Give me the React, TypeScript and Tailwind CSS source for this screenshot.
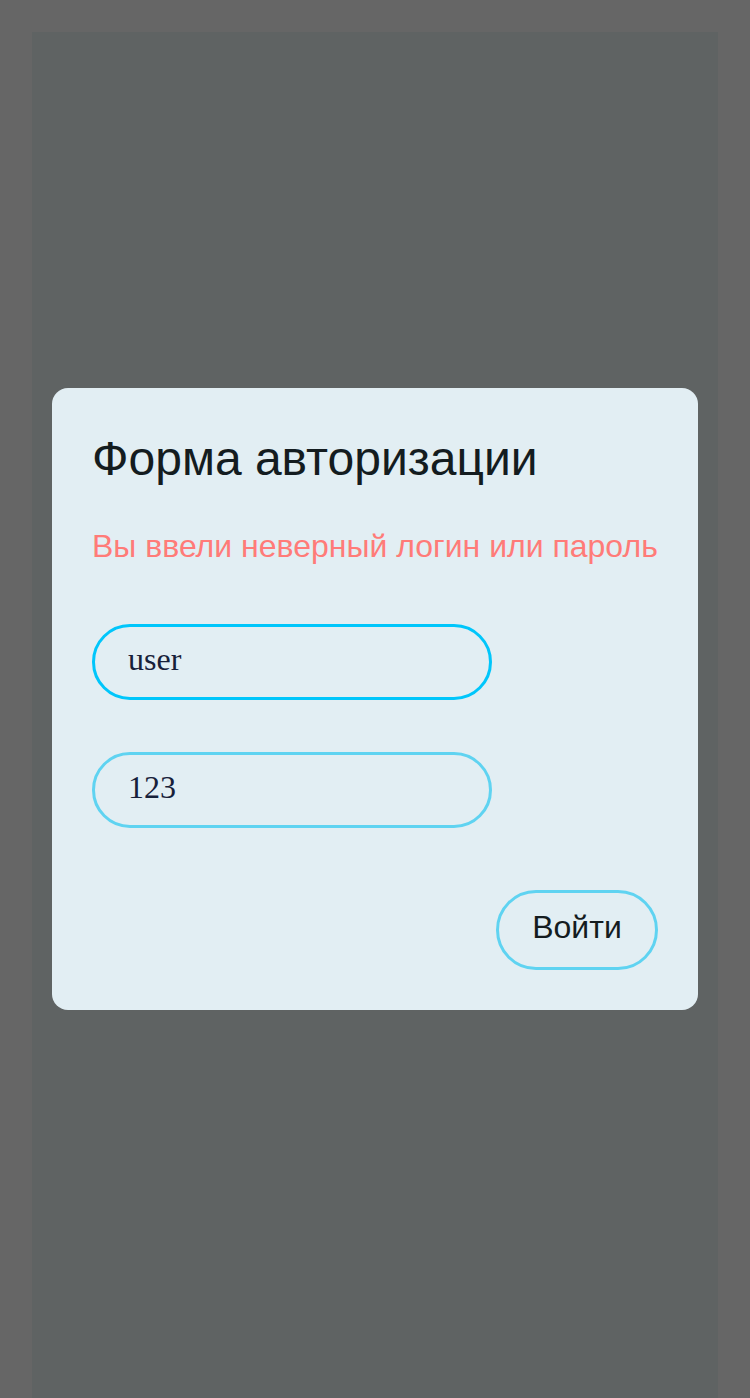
import React from 'react';

const App: React.FC = () => {
  return (
    <div className="min-h-screen bg-[#666666] px-8 pt-8">
      <div className="flex h-[1366px] items-center bg-[#5f6363] px-5 pb-8">
        <form
          className="flex w-full flex-col rounded-2xl bg-[#e2eef3] px-10 pt-[43px] pb-10"
          onSubmit={(e) => e.preventDefault()}
        >
          <h1 className="text-[48px] leading-[56px] text-[#141c1f] [font-family:'Liberation_Sans',Arial,sans-serif]">
            Форма авторизации
          </h1>
          <p className="mt-[39px] text-[32px] leading-[40px] text-[#ff7b78] [font-family:'Liberation_Sans',Arial,sans-serif]">
            Вы ввели неверный логин или пароль
          </p>
          <input
            defaultValue="user"
            className="mt-[58px] h-[76px] w-[400px] rounded-full border-[3px] border-[#00c6fb] bg-transparent px-[33px] pb-[6px] text-[32px] text-[#17213a] outline-none [font-family:'Liberation_Serif','Times_New_Roman',serif]"
          />
          <input
            defaultValue="123"
            className="mt-[52px] h-[76px] w-[400px] rounded-full border-[3px] border-[#5fd3f1] bg-transparent px-[33px] pb-[6px] text-[32px] text-[#17213a] outline-none [font-family:'Liberation_Serif','Times_New_Roman',serif]"
          />
          <div className="mt-[62px] flex justify-end">
            <button
              type="submit"
              className="h-[80px] w-[162px] rounded-full border-[3px] border-[#5fd3f1] bg-transparent pb-[6px] text-[32px] text-[#141c1f] [font-family:'Liberation_Sans',Arial,sans-serif]"
            >
              Войти
            </button>
          </div>
        </form>
      </div>
    </div>
  );
};

export default App;
